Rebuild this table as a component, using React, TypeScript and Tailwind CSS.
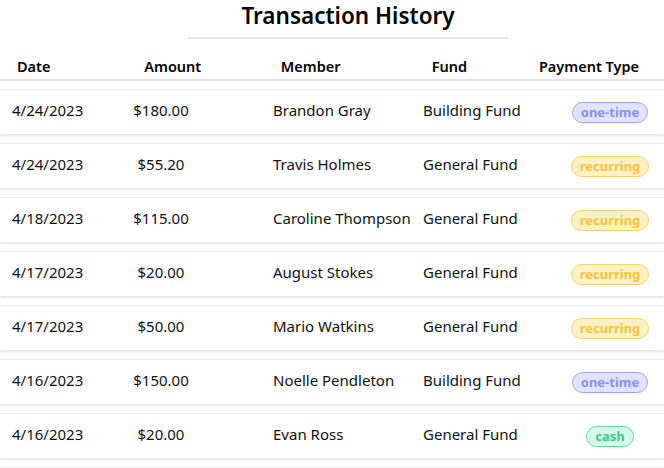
const rows = [
  { date: "4/24/2023", amount: "$180.00", member: "Brandon Gray", fund: "Building Fund", type: "one-time" },
  { date: "4/24/2023", amount: "$55.20", member: "Travis Holmes", fund: "General Fund", type: "recurring" },
  { date: "4/18/2023", amount: "$115.00", member: "Caroline Thompson", fund: "General Fund", type: "recurring" },
  { date: "4/17/2023", amount: "$20.00", member: "August Stokes", fund: "General Fund", type: "recurring" },
  { date: "4/17/2023", amount: "$50.00", member: "Mario Watkins", fund: "General Fund", type: "recurring" },
  { date: "4/16/2023", amount: "$150.00", member: "Noelle Pendleton", fund: "Building Fund", type: "one-time" },
  { date: "4/16/2023", amount: "$20.00", member: "Evan Ross", fund: "General Fund", type: "cash" },
];

const badgeStyles: Record<string, string> = {
  "one-time": "bg-[#e0e4ff] border-[#9ca3f5] text-[#8b90ec]",
  recurring: "bg-[#fff1c4] border-[#fcd168] text-[#f8c23a]",
  cash: "bg-[#d3f8e6] border-[#5ed9a6] text-[#3dca8e]",
};

function Badge({ type }: { type: string }) {
  return (
    <span
      className={`inline-flex h-[21px] items-center rounded-full border px-2 text-[13px] font-bold leading-none ${badgeStyles[type]}`}
    >
      {type}
    </span>
  );
}

export default function App() {
  return (
    <div
      className="h-[468px] w-[664px] overflow-hidden bg-white text-[#111]"
      style={{ fontFamily: '"Noto Sans", "Open Sans", sans-serif' }}
    >
      {/* title */}
      <div className="flex flex-col items-center pl-8">
        <h1 className="text-[22.5px] font-semibold leading-8 text-black">Transaction History</h1>
        <div className="mt-[5px] h-[2px] w-[320px] bg-[#e4e4ea]" />
      </div>

      {/* header */}
      <div className="mt-[17px] flex border-b-2 border-[#e6e6ea] pb-[3px] text-[14.5px] font-semibold leading-5 text-black">
        <span className="w-[110px] pl-[17px]">Date</span>
        <span className="w-[128px] text-center">Amount</span>
        <span className="w-[150px] text-center">Member</span>
        <span className="w-[130px] text-center">Fund</span>
        <span className="w-[150px] shrink-0 text-center">Payment Type</span>
      </div>

      {/* rows */}
      <div className="mt-[8px] flex flex-col gap-[9px]">
        {rows.map((r, i) => (
          <div
            key={i}
            className="flex h-[45px] items-center border-t border-[#ececec] bg-white pb-[3px] text-[15px] shadow-[0_2px_2px_rgba(0,0,0,0.1)]"
          >
            <span className="w-[110px] pl-3">{r.date}</span>
            <span className="w-[102px] text-center">{r.amount}</span>
            <span className="w-[211px] whitespace-nowrap pl-[61px]">{r.member}</span>
            <span className="w-[137px] whitespace-nowrap">{r.fund}</span>
            <span className="flex w-[100px] justify-center pt-[3px]">
              <Badge type={r.type} />
            </span>
          </div>
        ))}
        <div className="h-[45px] border-t border-[#ececec]" />
      </div>
    </div>
  );
}
